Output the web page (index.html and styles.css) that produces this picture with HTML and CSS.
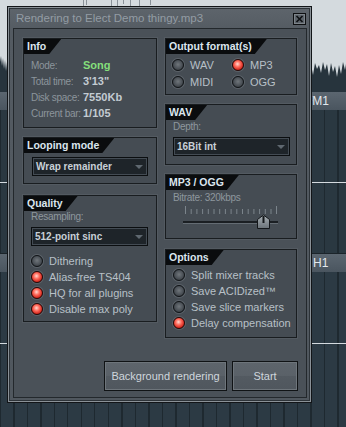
FILE: index.html
```html
<!DOCTYPE html>
<html>
  <head>
    <meta charset="utf-8">
    <title>Rendering</title>
    <link rel="stylesheet" href="styles.css">
  </head>
  <body>
    <div class="desk">
      <div class="wave">
        <svg width="346" height="92" viewBox="0 0 346 92">
          <path fill="#d4dade" d="M0 0 H346 V64 L345 70 L343 62 L341 74 L339 65 L337 77 L335 66 L333 72 L331 63 L329 76 L327 64 L325 70 L323 62 L321 73 L319 65 L317 69 L315 63 L313 75 L311 64 L10 64 L8 68 L7 62 L6 71 L5 60 L4 69 L3 58 L2 66 L1 56 L0 62 Z"/>
          <g stroke="#8a9299" stroke-width="1">
            <line x1="83.5" y1="0" x2="83.5" y2="6"/>
            <line x1="86.5" y1="0" x2="86.5" y2="5"/>
            <line x1="111.5" y1="0" x2="111.5" y2="6"/>
            <line x1="117.5" y1="0" x2="117.5" y2="6"/>
            <line x1="123.5" y1="0" x2="123.5" y2="4"/>
            <line x1="130.5" y1="0" x2="130.5" y2="6"/>
            <line x1="139.5" y1="0" x2="139.5" y2="6"/>
            <line x1="150.5" y1="0" x2="150.5" y2="5"/>
          </g>
        </svg>
      </div>
      <div class="track">
        <div class="track-head">FM1</div>
        <div class="lane"></div>
      </div>
      <div class="track">
        <div class="track-head track-head-2">H1</div>
        <div class="lane lane-last"></div>
      </div>

      <div class="dialog">
        <div class="titlebar">
          <span class="title">Rendering to Elect Demo thingy.mp3</span>
          <span class="close">
            <svg width="11" height="10" viewBox="0 0 11 10">
              <path d="M2.5 2 L8.5 8 M8.5 2 L2.5 8" stroke="#0d1012" stroke-width="1.6"/>
            </svg>
          </span>
        </div>
        <div class="body">
          <div class="cols">
            <div class="col">
              <div class="panel info">
                <div class="tab">Info</div>
                <div class="info-rows">
                  <div class="row"><span class="label">Mode:</span><span class="value green">Song</span></div>
                  <div class="row"><span class="label">Total time:</span><span class="value">3'13"</span></div>
                  <div class="row"><span class="label">Disk space:</span><span class="value">7550Kb</span></div>
                  <div class="row"><span class="label">Current bar:</span><span class="value">1/105</span></div>
                </div>
              </div>
              <div class="panel looping">
                <div class="tab">Looping mode</div>
                <div class="select">Wrap remainder<span class="arrow"></span></div>
              </div>
              <div class="panel quality">
                <div class="tab">Quality</div>
                <div class="small">Resampling:</div>
                <div class="select">512-point sinc<span class="arrow"></span></div>
                <div class="radios">
                  <div class="radio"><span class="dot"></span>Dithering</div>
                  <div class="radio"><span class="dot on"></span>Alias-free TS404</div>
                  <div class="radio"><span class="dot on"></span>HQ for all plugins</div>
                  <div class="radio"><span class="dot on"></span>Disable max poly</div>
                </div>
              </div>
            </div>
            <div class="col">
              <div class="panel output">
                <div class="tab">Output format(s)</div>
                <div class="formats">
                  <div class="radio"><span class="dot"></span>WAV</div>
                  <div class="radio"><span class="dot on"></span>MP3</div>
                  <div class="radio"><span class="dot"></span>MIDI</div>
                  <div class="radio"><span class="dot"></span>OGG</div>
                </div>
              </div>
              <div class="panel wav">
                <div class="tab">WAV</div>
                <div class="small">Depth:</div>
                <div class="select">16Bit int<span class="arrow"></span></div>
              </div>
              <div class="panel mp3">
                <div class="tab">MP3 / OGG</div>
                <div class="small">Bitrate: 320kbps</div>
                <svg class="slider" width="130" height="26" viewBox="0 0 130 26">
                  <g stroke="#7b848b" stroke-width="1">
                    <line x1="19.5" y1="2" x2="19.5" y2="10"/>
                    <line x1="25.2" y1="5" x2="25.2" y2="10"/>
                    <line x1="30.9" y1="5" x2="30.9" y2="10"/>
                    <line x1="36.6" y1="5" x2="36.6" y2="10"/>
                    <line x1="42.3" y1="5" x2="42.3" y2="10"/>
                    <line x1="48" y1="5" x2="48" y2="10"/>
                    <line x1="53.7" y1="5" x2="53.7" y2="10"/>
                    <line x1="59.4" y1="5" x2="59.4" y2="10"/>
                    <line x1="65.1" y1="5" x2="65.1" y2="10"/>
                    <line x1="70.8" y1="5" x2="70.8" y2="10"/>
                    <line x1="76.5" y1="5" x2="76.5" y2="10"/>
                    <line x1="82.2" y1="5" x2="82.2" y2="10"/>
                    <line x1="87.9" y1="5" x2="87.9" y2="10"/>
                    <line x1="93.6" y1="5" x2="93.6" y2="10"/>
                    <line x1="99.3" y1="5" x2="99.3" y2="10"/>
                    <line x1="105" y1="5" x2="105" y2="10"/>
                    <line x1="110.5" y1="2" x2="110.5" y2="10"/>
                  </g>
                  <line x1="17" y1="18" x2="112" y2="18" stroke="#0e1113" stroke-width="1.5"/>
                  <line x1="17" y1="19.5" x2="112" y2="19.5" stroke="#646c73" stroke-width="1"/>
                  <defs>
                    <linearGradient id="thumb" x1="0" y1="0" x2="0" y2="1">
                      <stop offset="0" stop-color="#aab1b6"/>
                      <stop offset="1" stop-color="#6a7278"/>
                    </linearGradient>
                  </defs>
                  <path d="M91.5 24.5 V15.5 L97.5 11 L103.5 15.5 V24.5 Z" fill="url(#thumb)" stroke="#14171a" stroke-width="1"/>
                  <line x1="97.5" y1="12" x2="97.5" y2="19" stroke="#15181b" stroke-width="2"/>
                </svg>
              </div>
              <div class="panel options">
                <div class="tab">Options</div>
                <div class="radios">
                  <div class="radio"><span class="dot"></span>Split mixer tracks</div>
                  <div class="radio"><span class="dot"></span>Save ACIDized™</div>
                  <div class="radio"><span class="dot"></span>Save slice markers</div>
                  <div class="radio"><span class="dot on"></span>Delay compensation</div>
                </div>
              </div>
            </div>
          </div>
          <div class="buttons">
            <button class="btn btn-bg">Background rendering</button>
            <button class="btn btn-start">Start</button>
          </div>
        </div>
      </div>
    </div>
  </body>
</html>
```

FILE: styles.css
```css
body {
  margin: 0;
  background-color: #28353e;
  font-family: "Liberation Sans", Arial, sans-serif;
}
.desk {
  position: relative;
  width: 346px;
  height: 427px;
  overflow: hidden;
}
.wave {
  height: 92px;
  background-color: #27343d;
}
.wave svg {
  display: block;
}
.track-head {
  height: 18px;
  line-height: 18px;
  padding-left: 305px;
  background: linear-gradient(#5b6670, #4a555f);
  color: #e2e8ed;
  font-size: 12px;
}
.track-head-2 {
  height: 19px;
  line-height: 19px;
  padding-left: 313px;
  border-top: 1px solid #1b242a;
  box-sizing: border-box;
}
.lane {
  height: 143px;
  background:
    linear-gradient(to bottom, transparent 72px, #d4dadf 72px, #d4dadf 73px, transparent 73px),
    repeating-linear-gradient(to right, #1e2930 0, #1e2930 1px, transparent 1px, transparent 13.5px),
    #2a3841;
}
.lane-last {
  height: 155px;
  background:
    linear-gradient(to bottom, transparent 71px, #d4dadf 71px, #d4dadf 72px, transparent 72px),
    repeating-linear-gradient(to right, #1e2930 0, #1e2930 1px, transparent 1px, transparent 13.5px),
    #2c3a44;
}

/* render dialog */
.dialog {
  position: absolute;
  left: 7px;
  top: 6px;
  width: 305px;
  height: 397px;
  box-sizing: border-box;
  border: 1px solid #121518;
  box-shadow: inset 0 0 0 1px #8a9197, inset 0 0 0 2px #2d3338;
  background: linear-gradient(#5e656c, #545b62 24px, #50575e);
  padding: 0 4px 4px 5px;
  display: flex;
  flex-direction: column;
}
.titlebar {
  height: 21px;
  display: flex;
  justify-content: space-between;
  align-items: center;
  padding-left: 3px;
}
.title {
  color: #939ca4;
  font-size: 11.5px;
  margin-top: 1px;
}
.close {
  width: 13px;
  height: 12px;
  box-sizing: border-box;
  border: 1px solid #0e1012;
  box-shadow: inset 0 0 0 1px #7c8389;
  background-color: #5c636a;
  margin-right: 1px;
  margin-top: 2px;
  display: flex;
  align-items: center;
  justify-content: center;
}
.close svg {
  display: block;
}
.body {
  flex: 1;
  border: 1px solid #23282c;
  background-color: #4a5158;
  padding: 9px 8px 0 9px;
  display: flex;
  flex-direction: column;
}
.cols {
  display: grid;
  grid-template-columns: 134px 132px;
  column-gap: 8px;
  align-items: start;
}
.col {
  display: flex;
  flex-direction: column;
}
.panel {
  box-sizing: border-box;
  border: 1px solid #191d20;
  box-shadow: 0 0 0 1px #535a61;
  background-color: #454c53;
  display: flex;
  flex-direction: column;
}
.tab {
  align-self: flex-start;
  height: 15px;
  line-height: 15px;
  padding: 0 15px 0 3px;
  background-color: #0a0c0e;
  color: #dbe6ef;
  font-size: 10.5px;
  font-weight: bold;
  clip-path: polygon(0 0, 100% 0, calc(100% - 12px) 100%, 0 100%);
}

.info { height: 90px; }
.looping { height: 47px; margin-top: 9px; padding: 0 8px; }
.quality { height: 127px; margin-top: 11px; padding: 0 8px 0 7px; }
.output { height: 57px; }
.wav { height: 61px; margin-top: 9px; padding: 0 6px 0 7px; }
.mp3 { height: 65px; margin-top: 9px; padding: 0 0 0 7px; }
.options { height: 89px; margin-top: 10px; padding: 0 0 0 7px; }

.looping .tab {
  margin-left: -8px;
}
.quality .tab, .wav .tab, .mp3 .tab, .options .tab {
  margin-left: -7px;
}

.info-rows {
  padding: 3px 0 0 7px;
}
.row {
  display: flex;
  align-items: center;
  height: 16px;
}
.label {
  width: 52px;
  font-size: 10px;
  letter-spacing: -0.3px;
  color: #8c959c;
}
.value {
  font-size: 11px;
  font-weight: bold;
  color: #c3cbd2;
}
.green {
  color: #84df7b;
}

.small {
  height: 12px;
  line-height: 12px;
  font-size: 10px;
  letter-spacing: -0.3px;
  color: #8e979e;
}
.wav .small { margin-top: 1px; }
.mp3 .small { margin-top: 2px; }

.select {
  height: 19px;
  box-sizing: border-box;
  border: 1px solid #0b0e10;
  box-shadow: inset 0 0 0 1px #434b53;
  background-color: #1e2429;
  display: flex;
  align-items: center;
  justify-content: space-between;
  padding: 0 4px 0 3px;
  margin-top: 4px;
  color: #c8d0d7;
  font-size: 10px;
  font-weight: bold;
}
.arrow {
  width: 0;
  height: 0;
  border-left: 4px solid transparent;
  border-right: 4px solid transparent;
  border-top: 4px solid #5f6870;
}

.formats {
  display: grid;
  grid-template-columns: 60px 60px;
  padding: 2px 0 0 6px;
}
.formats .radio {
  height: 17px;
}
.radios {
  padding-top: 2px;
}
.quality .radios {
  padding-top: 7px;
}
.radio {
  display: flex;
  align-items: center;
  gap: 6px;
  height: 16px;
  font-size: 11px;
  color: #b8c0c7;
}
.dot {
  width: 12px;
  height: 12px;
  box-sizing: border-box;
  border-radius: 50%;
  border: 1px solid #111417;
  box-shadow: 0 0 0 1px #5b6269;
  background: radial-gradient(circle at 50% 45%, #70767b 0, #51575d 45%, #2c3136 100%);
}
.dot.on {
  border-color: #2a0806;
  background: radial-gradient(circle at 45% 40%, #ffd9d2 0, #ff6b5c 35%, #d3281e 70%, #7a120c 100%);
}
.slider {
  display: block;
  margin-left: -7px;
}

.buttons {
  display: flex;
  justify-content: flex-end;
  gap: 5px;
  margin-top: 23px;
}
.btn {
  height: 30px;
  box-sizing: border-box;
  border: 1px solid #101315;
  box-shadow: inset 0 0 0 1px #6e757b;
  background: linear-gradient(#5e656c 0, #5a6168 50%, #535a61 50%, #50575e 100%);
  color: #cfd6dc;
  font-family: "Liberation Sans", Arial, sans-serif;
  font-size: 11px;
  padding: 0;
}
.btn-bg {
  width: 123px;
}
.btn-start {
  width: 66px;
}
```
